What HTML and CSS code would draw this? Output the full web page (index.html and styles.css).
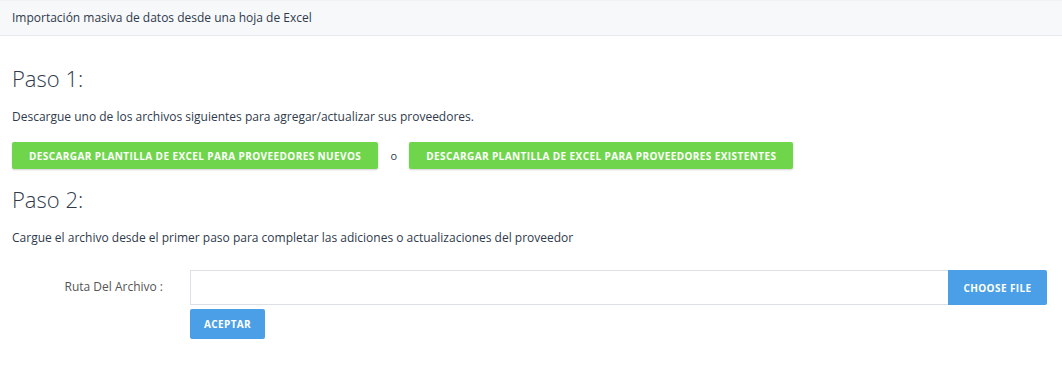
FILE: index.html
```html
<!DOCTYPE html>
<html lang="es">

<head>
  <meta charset="UTF-8">
  <meta name="viewport" content="width=device-width, initial-scale=1.0">
  <title>Importación masiva</title>
  <link rel="stylesheet" href="styles.css">
</head>

<body>
  <div class="panel-header">Importación masiva de datos desde una hoja de Excel</div>

  <div class="panel-body">
    <h2>Paso 1:</h2>
    <p>Descargue uno de los archivos siguientes para agregar/actualizar sus proveedores.</p>
    <div class="download-row">
      <button class="btn btn-green">Descargar plantilla de Excel para proveedores nuevos</button>
      <span class="or">o</span>
      <button class="btn btn-green">Descargar plantilla de Excel para proveedores existentes</button>
    </div>

    <h2>Paso 2:</h2>
    <p>Cargue el archivo desde el primer paso para completar las adiciones o actualizaciones del proveedor</p>

    <!-- File upload form -->
    <div class="upload-form">
      <label class="form-label">Ruta Del Archivo :</label>
      <div class="form-field">
        <div class="file-group">
          <input type="text" class="file-path">
          <button class="btn btn-blue choose-btn">Choose File</button>
        </div>
        <button class="btn btn-blue accept-btn">Aceptar</button>
      </div>
    </div>
  </div>
</body>

</html>
```

FILE: styles.css
```css
/* General Styles */
body {
  font-family: 'Open Sans', 'Noto Sans', sans-serif;
  margin: 0;
  background-color: #fff;
  color: #2f3a4c;
  font-size: 12px;
}

.panel-header {
  background-color: #f7f8fa;
  border-bottom: 1px solid #e7e9ee;
  border-top: 1px solid #f0f1f4;
  height: 34px;
  line-height: 34px;
  padding: 0 12px;
}

.panel-body {
  padding: 28px 12px 20px;
}

h2 {
  font-weight: 300;
  font-size: 22px;
  margin: 0 0 16px;
  line-height: 28px;
  color: #2f3a4c;
}

p {
  margin: 0 0 16px;
  line-height: 18px;
}

/* Buttons */
.btn {
  font-family: 'Open Sans', 'Noto Sans', sans-serif;
  font-weight: 700;
  font-size: 10px;
  text-transform: uppercase;
  letter-spacing: 0.4px;
  color: #fff;
  border: none;
  border-radius: 2px;
  cursor: pointer;
}

.btn-green {
  background-color: #6fd64b;
  height: 27px;
  padding: 0 17px;
  box-shadow: 0 1px 2px rgba(0, 0, 0, 0.18);
}

.btn-blue {
  background-color: #4a9fe6;
}

.download-row {
  display: flex;
  align-items: center;
  gap: 12px;
  margin-bottom: 16px;
}

.or {
  font-size: 11px;
  width: 7px;
  text-align: center;
}

/* Upload form */
.upload-form {
  display: flex;
  margin-top: 23px;
}

.form-label {
  width: 151px;
  text-align: right;
  line-height: 34px;
  color: #555;
  font-size: 12px;
  padding-right: 27px;
}

.form-field {
  display: flex;
  flex-direction: column;
  align-items: flex-start;
  gap: 4px;
  width: 857px;
}

.file-group {
  display: flex;
  width: 100%;
}

.file-path {
  flex: 1;
  height: 35px;
  box-sizing: border-box;
  border: 1px solid #dcdfe6;
  border-right: none;
  outline: none;
}

.choose-btn {
  width: 99px;
  height: 35px;
  border-radius: 0 2px 2px 0;
}

.accept-btn {
  width: 75px;
  height: 30px;
}
```
